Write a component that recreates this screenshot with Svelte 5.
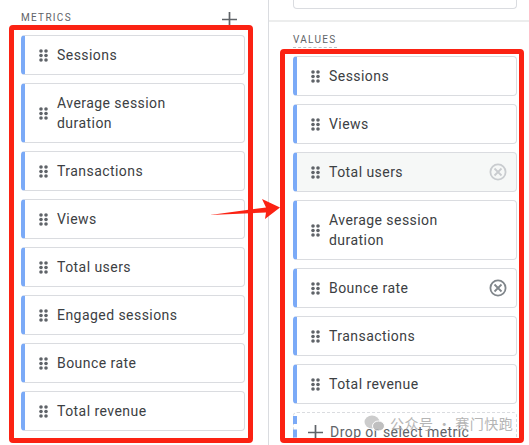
<script lang="ts">
	type Chip = { label: string; remove?: 'faint' | 'dark'; hover?: boolean };

	const metrics: Chip[] = [
		{ label: 'Sessions' },
		{ label: 'Average session duration' },
		{ label: 'Transactions' },
		{ label: 'Views' },
		{ label: 'Total users' },
		{ label: 'Engaged sessions' },
		{ label: 'Bounce rate' },
		{ label: 'Total revenue' },
	];

	const values: Chip[] = [
		{ label: 'Sessions' },
		{ label: 'Views' },
		{ label: 'Total users', remove: 'faint', hover: true },
		{ label: 'Average session duration' },
		{ label: 'Bounce rate', remove: 'dark' },
		{ label: 'Transactions' },
		{ label: 'Total revenue' },
	];

	const dots = [
		[2, 2], [7, 2],
		[2, 6.5], [7, 6.5],
		[2, 11], [7, 11],
	];
</script>

{#snippet chip(item: Chip)}
	<div class="chip" class:hover={item.hover}>
		<svg class="grip" width="9" height="13" viewBox="0 0 9 13">
			{#each dots as [cx, cy]}
				<circle {cx} {cy} r="1.8" fill="#5f6368" />
			{/each}
		</svg>
		<span class="label">{item.label}</span>
		{#if item.remove}
			<svg class="remove {item.remove}" width="18" height="18" viewBox="0 0 18 18" fill="none">
				<circle cx="9" cy="9" r="7.6" stroke-width="1.8" />
				<path d="M5.5 5.5l7 7M12.5 5.5l-7 7" stroke-width="1.8" />
			</svg>
		{/if}
	</div>
{/snippet}

<main class="page">
	<section class="col left">
		<header class="left-head">
			<span class="caption">METRICS</span>
			<svg class="plus" width="15" height="15" viewBox="0 0 15 15">
				<path d="M7.5 0v15M0 7.5h15" stroke="#5f6368" stroke-width="1.7" fill="none" />
			</svg>
		</header>
		<div class="redbox">
			{#each metrics as item}
				{@render chip(item)}
			{/each}
		</div>
	</section>

	<section class="col right">
		<div class="stub"></div>
		<div class="rule"></div>
		<div class="caption values">VALUES</div>
		<div class="redbox clip">
			{#each values as item}
				{@render chip(item)}
			{/each}
			<div class="drop">
				<svg class="plus" width="15" height="15" viewBox="0 0 15 15">
					<path d="M7.5 0v15M0 7.5h15" stroke="#5f6368" stroke-width="1.7" fill="none" />
				</svg>
				<span>Drop or select metric</span>
			</div>
		</div>
	</section>

	<svg class="arrow" width="72" height="24" viewBox="0 0 72 24">
		<path d="M0 17L56 9.5L52 1L70 9.5L55 21L56 14.5Z" fill="#fb2213" />
	</svg>

	<div class="mark">
		<svg width="21" height="17" viewBox="0 0 21 17">
			<ellipse cx="8" cy="7" rx="7.5" ry="6.5" fill="#c4c4c4" />
			<ellipse cx="14.5" cy="11" rx="6" ry="5" fill="#b5b5b5" stroke="#fff" stroke-width="1" />
		</svg>
		<span>公众号 · 赛门快跑</span>
	</div>
</main>

<style>
	:global(body) {
		margin: 0;
		background: #fff;
	}

	.page {
		position: relative;
		width: 529px;
		height: 445px;
		overflow: hidden;
		display: grid;
		grid-template-columns: 268px 1fr;
		font-family: Roboto, 'Noto Sans', sans-serif;
		color: #3c4043;
	}

	.col {
		display: flex;
		flex-direction: column;
		min-width: 0;
	}

	.left {
		padding: 11px 0 0 9px;
	}

	.right {
		border-left: 1px solid #dadce0;
		padding-left: 11px;
	}

	.left-head {
		display: flex;
		justify-content: space-between;
		align-items: flex-start;
		height: 14px;
		padding: 0 31px 0 12px;
	}

	.left-head .plus {
		margin-top: 1px;
	}

	.caption {
		font-size: 10px;
		line-height: 14px;
		letter-spacing: 1.3px;
		color: #5f6368;
	}

	.redbox {
		box-sizing: border-box;
		width: 244px;
		border: 5px solid #fb2213;
		border-radius: 4px;
		padding: 5px 7px;
		display: flex;
		flex-direction: column;
		gap: 8px;
		height: 418px;
	}

	.right .redbox {
		height: 394px;
		padding: 2px 8px;
	}

	.clip {
		overflow: hidden;
	}

	.stub {
		box-sizing: border-box;
		height: 9px;
		width: 224px;
		margin-left: 13px;
		border: 1px solid #dadce0;
		border-top: 0;
		border-radius: 0 0 4px 4px;
	}

	.rule {
		height: 2px;
		margin: 11px 0 0 -11px;
		background: #eceded;
	}

	.values {
		margin: 11px 0 1px 13px;
		width: 44px;
		border-bottom: 1px dashed #bdc1c6;
		height: 14px;
	}

	.chip {
		box-sizing: border-box;
		flex: none;
		display: flex;
		align-items: center;
		min-height: 40px;
		width: 224px;
		padding: 0 9px 0 14px;
		border: 1px solid #dadce0;
		border-left: 4px solid #7baaf7;
		border-radius: 4px;
		background: #fff;
	}

	.chip.hover {
		background: #f6f8f7;
	}

	.grip {
		flex: none;
		margin-right: 9px;
	}

	.label {
		flex: 1;
		font-size: 14px;
		line-height: 20px;
		letter-spacing: 0.45px;
		padding: 9px 40px 9px 0;
	}

	.remove {
		flex: none;
		margin-left: -40px;
	}

	.remove.faint {
		stroke: #c9cccf;
	}

	.remove.dark {
		stroke: #80868b;
	}

	.drop {
		box-sizing: border-box;
		position: relative;
		flex: none;
		display: flex;
		align-items: center;
		gap: 7px;
		width: 224px;
		height: 40px;
		padding-left: 14px;
		border: 1px dashed #dadce0;
		border-radius: 4px;
		font-size: 14px;
		letter-spacing: 0.45px;
		color: #5f6368;
	}

	.drop::before {
		content: '';
		position: absolute;
		left: -1px;
		top: 3px;
		bottom: 0;
		border-left: 4px dashed #7baaf7;
	}

	.arrow {
		position: absolute;
		left: 210px;
		top: 198px;
	}

	.mark {
		position: absolute;
		left: 364px;
		top: 413px;
		display: flex;
		align-items: center;
		gap: 5px;
		font-family: 'Noto Sans CJK SC', sans-serif;
		font-size: 14px;
		letter-spacing: 0.5px;
		color: #a9a9a9;
		opacity: 0.85;
	}
</style>
